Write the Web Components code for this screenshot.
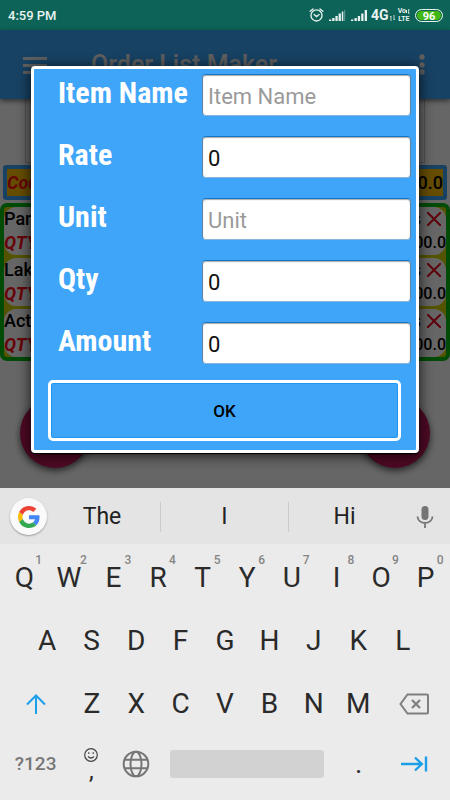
<!DOCTYPE html>
<html lang="en">
<head>
<meta charset="utf-8">
<meta name="viewport" content="width=device-width, initial-scale=1">
<title>Order List Maker</title>
<style>
html,body{margin:0;height:100%}
body{font-family:Roboto,"Liberation Sans",sans-serif;color:#000;background:#ebebeb}
</style>
</head>
<body>
<order-screen></order-screen>
<script>
const define = (name, html, setup) => {
  const t = document.createElement('template');
  t.innerHTML = '<style>*{box-sizing:border-box}button,input{font:inherit;color:inherit;margin:0;padding:0;border:0;background:none}svg{display:block;flex:none}</style>' + html;
  customElements.define(name, class extends HTMLElement {
    constructor() {
      super();
      this.attachShadow({ mode: 'open' }).append(t.content.cloneNode(true));
    }
    connectedCallback() {
      if (this.ready) return;
      this.ready = true;
      if (setup) setup(this, this.shadowRoot);
    }
  });
};

define('status-bar', `
<style>
:host{display:flex;align-items:center;height:30px;padding:0 7px 0 8px;background:#0d6357;color:#e8f2f0;font-size:13px;font-weight:500}
.icons{display:flex;align-items:center;gap:5px;margin-left:auto}
.net{display:flex;align-items:center;gap:3px;font-size:14px;font-weight:700}
.net span+svg{margin:6px 0 0 -2px}
.volte{display:grid;font-size:7px;line-height:8px;font-weight:700;text-align:center;margin-left:-2px}
.volte span{display:flex;justify-content:center;align-items:center}
.battery{display:grid;place-items:center;width:28px;height:13px;padding-top:1px;border:1px solid #e8f2f0;border-radius:7px;background:#43b814;box-shadow:inset 0 0 0 1px #0d6357;color:#fff;font-size:11px;line-height:11px;font-weight:700}
</style>
<span>4:59 PM</span>
<div class="icons">
 <svg width="15" height="16" viewBox="0 0 16 16" fill="none" stroke="currentColor" stroke-width="1.4" stroke-linecap="round"><circle cx="8" cy="8.500" r="5.900"/><path d="M1.200 4 4.300 1.500M14.800 4l-3.100-2.500M5.500 7.500 8 9.700l2.800-2.200"/></svg>
 <svg width="17" height="13" viewBox="0 0 17 13" fill="currentColor"><path d="M0 10.500h2.300V12H0zM3.200 9h2.300v3H3.200zM6.400 7h2.300v5H6.400zM9.600 4.500h2.300V12H9.600zM12.800 2.500h1.500V12h-1.500z"/><path opacity=".35" d="M15 1h1.200v11H15z"/></svg>
 <div class="net"><svg width="17" height="13" viewBox="0 0 17 13" fill="currentColor"><path d="M0 10.500h2.300V12H0zM3.500 9h2.300v3H3.500zM6.800 7h2.300v5H6.800zM10.200 4.500h2.300V12h-2.300zM13.700 1H16v11h-2.300z"/></svg><span>4G</span><svg width="5" height="6" viewBox="0 0 5 6" stroke="currentColor" fill="none" stroke-width=".8"><path d="M1 6V1L0 2.200M4 0v5l1-1.200"/></svg></div>
 <div class="volte"><span>Vo<svg width="4" height="5" viewBox="0 0 4 5" stroke="currentColor" fill="none"><path d="M.5 1v3M3 0q-1 2.500 0 5"/></svg></span><span>LTE</span></div>
 <div class="battery">96</div>
</div>`);

define('app-bar', `
<style>
:host{display:flex;align-items:center;height:69px;padding:0 16px 0 23px;background:#3ea5f9;color:#eee;box-shadow:0 2px 5px #0008;position:relative}
h1{flex:1;margin:0 0 0 44px;font-size:25px;line-height:32px;font-weight:500}
button{display:block}
</style>
<button aria-label="Menu"><svg width="24" height="18" viewBox="0 0 24 18" fill="currentColor"><path d="M0 1h24v3H0zM0 8h24v3H0zM0 15h24v3H0z"/></svg></button>
<h1>Order List Maker</h1>
<button aria-label="More"><svg width="24" height="22" viewBox="0 0 24 22" fill="currentColor"><circle cx="12" cy="3" r="2.700"/><circle cx="12" cy="11" r="2.700"/><circle cx="12" cy="18" r="2.700"/></svg></button>`);

define('order-card', `
<style>
:host{display:grid;grid-template-columns:1fr auto;align-content:center;height:48px;background:#fff;border-radius:12px;font-size:18px;line-height:24px;font-weight:500}
.qty{color:#ff0a16;font-style:italic;font-weight:700}
.r{display:flex;justify-content:flex-end;gap:6px;align-items:center;padding-right:5px}
.amt{text-align:right;font-size:16px}
</style>
<slot></slot><span class="r">s<button aria-label="Delete"><svg width="14" height="14" viewBox="0 0 14 14" stroke="#e8001f" stroke-width="2"><path d="m0 0 14 14M14 0 0 14"/></svg></button></span>
<span class="qty">QTY</span><span class="amt">00.0</span>`);

define('order-page', `
<style>
:host{display:flex;flex-direction:column;background:#fff}
.entry{height:64px;margin:0 25px;border:1px solid #ccc;border-top:0}
.total{display:flex;margin:2px 3px 3px;border:4px solid #3ea5f9;border-radius:3px;background:#ffc107;height:35px;line-height:27px;font-size:18px;font-weight:500;justify-content:space-between}
.total i{color:#ff0a16;font-weight:700}
.list{display:grid;gap:3px;border:4px solid #00be10;border-radius:7px;background:#d2d200;padding:0}
.fabs{display:flex;justify-content:space-between;padding:37px 20px 20px}
.fabs button{width:70px;height:70px;border-radius:50%;background:#c2185b;box-shadow:0 3px 7px #0009}
</style>
<app-bar></app-bar>
<div class="entry"></div>
<div class="total"><i>Cou</i><span>00.0</span></div>
<div class="list"><order-card>Par</order-card><order-card>Lak</order-card><order-card>Act</order-card></div>
<div class="fabs"><button aria-label="Add"></button><button aria-label="Share"></button></div>`);

define('item-field', `
<style>
:host{display:grid;grid-template-columns:144px 1fr;align-items:center}
label{font:700 30px/42px "Roboto Condensed","Liberation Sans Narrow",Roboto,sans-serif;color:#fff;height:42px;margin-top:-4px;white-space:nowrap}
input{width:100%;height:42px;padding:2px 5px 0;border:1px solid;border-color:#1276c4 #5d83a5 #8ab4d8;border-radius:4px;background:#fff;box-shadow:inset 0 1px 1px #aaa;font-size:22px;color:#111;outline:0;min-width:0}
input::placeholder{color:#9a9a9a;opacity:1}
</style>
<label for="f"></label><input id="f" type="text">`, (el, root) => {
  const name = el.getAttribute('name'), input = root.querySelector('input');
  root.querySelector('label').textContent = name;
  input.placeholder = name;
  input.value = el.getAttribute('value') || '';
});

define('item-dialog', `
<style>
:host{display:block;background:#3ea5f9;border:3px solid #fff;border-radius:4px;padding:5px 5px 9px 24px;box-shadow:0 2px 14px #000c,0 1px 1px #000}
form{display:grid;gap:20px}
.ok{display:block;height:61px;margin:-4px 10px 0 -10px;border:3px solid #fff;border-radius:5px;font-size:17px;font-weight:500;box-shadow:inset 0 0 0 1px #1c98f4}
</style>
<form onsubmit="return false">
<item-field name="Item Name"></item-field>
<item-field name="Rate" value="0"></item-field>
<item-field name="Unit"></item-field>
<item-field name="Qty" value="0"></item-field>
<item-field name="Amount" value="0"></item-field>
<button class="ok">OK</button>
</form>`);

define('suggestion-strip', `
<style>
:host{display:grid;grid-template-columns:44px 116fr 128fr 112fr 50fr;align-items:center;height:56px;padding-top:1px;box-sizing:border-box;background:#e4e4e4;color:#222;font-size:23px}
.g{display:grid;place-items:center;width:37px;height:37px;margin-left:10px;border-radius:50%;background:#fafafa;box-shadow:0 1px 2px #0005}
.w{height:30px;line-height:30px;min-width:0}
.w+.w{border-left:1px solid #ccc}
.mic{justify-self:center}
</style>
<button class="g" aria-label="Google"><svg width="22" height="22" viewBox="0 0 48 48"><path fill="#EA4335" d="M24 9.500c3.540 0 6.710 1.220 9.210 3.600l6.850-6.850C35.900 2.380 30.470 0 24 0 14.620 0 6.510 5.380 2.560 13.220l7.980 6.190C12.430 13.720 17.740 9.500 24 9.500z"/><path fill="#4285F4" d="M46.980 24.550c0-1.570-.15-3.090-.38-4.550H24v9.020h12.940c-.58 2.960-2.260 5.480-4.780 7.180l7.730 6c4.510-4.180 7.090-10.360 7.090-17.650z"/><path fill="#FBBC05" d="M10.530 28.590c-.48-1.450-.76-2.990-.76-4.590s.27-3.140.76-4.590l-7.980-6.190C.92 16.460 0 20.120 0 24c0 3.880.92 7.540 2.560 10.780l7.970-6.190z"/><path fill="#34A853" d="M24 48c6.480 0 11.930-2.130 15.890-5.810l-7.730-6c-2.150 1.450-4.920 2.300-8.160 2.300-6.260 0-11.570-4.220-13.470-9.910l-7.980 6.190C6.510 42.620 14.620 48 24 48z"/></svg></button>
<button class="w">The</button><button class="w">I</button><button class="w">Hi</button>
<button class="mic" aria-label="Voice input"><svg width="18" height="24" viewBox="0 0 18 24" fill="none" stroke="#757575"><rect x="5.500" y="1" width="7" height="14" rx="3.500" fill="#757575" stroke="none"/><path stroke-width="1.800" d="M1.500 11.500a7.500 6.500 0 0 0 15 0M9 18v5"/></svg></button>`);

define('key-cap', `
<style>
:host{display:block;flex:1 1 0;min-width:0;position:relative}
button{display:grid;place-items:center;width:100%;height:63px;font-size:28px;line-height:32px;color:#2a2a2a}
sup{position:absolute;left:50%;margin-left:11px;top:8px;font-size:12px;line-height:12px;font-weight:500;color:#858585}
</style>
<button><slot></slot></button>`, (el, root) => {
  if (el.hasAttribute('hint')) {
    const s = document.createElement('sup');
    s.textContent = el.getAttribute('hint');
    root.append(s);
  }
  if (el.hasAttribute('label')) root.querySelector('button').setAttribute('aria-label', el.getAttribute('label'));
});

define('soft-keyboard', `
<style>
:host{display:block;background:#ebebeb;padding-bottom:5px}
.row{display:flex;padding:0 2px}
.row.two{padding:0 25px}
.row.one{padding-top:2px}
.row.four{margin-top:-3px}
.wide{flex:67 1 0}
.n{flex:44 1 0}
.sp{flex:178 1 0}
.bar{display:block;width:154px;max-width:100%;height:28px;border-radius:3px;background:#d2d2d2}
.num{font-size:19px;font-weight:500;color:#777}
.stack{display:grid;justify-items:center;line-height:18px;font-size:24px}
</style>
<suggestion-strip></suggestion-strip>
<div class="row one"></div>
<div class="row two"></div>
<div class="row three"><key-cap class="wide" label="Shift"><svg width="20" height="20" viewBox="0 0 20 20" fill="none" stroke="#1a9fe8" stroke-width="2"><path d="M10 20V1.500M1 10.500l9-9 9 9"/></svg></key-cap></div>
<div class="row four">
<key-cap class="wide"><span class="num">?123</span></key-cap>
<key-cap class="n" label="Emoji, comma"><span class="stack"><svg width="14" height="14" viewBox="0 0 14 14" fill="none" stroke="#444" stroke-width="1.200"><circle cx="7" cy="7" r="6.300"/><path d="M4 8.500q3 3 6 0"/><path d="M4.800 4.300v1.600M9.200 4.300v1.600"/></svg><span>,</span></span></key-cap>
<key-cap class="n" label="Language"><svg width="28" height="28" viewBox="0 0 28 28" fill="none" stroke="#757575" stroke-width="2"><circle cx="14" cy="14" r="12.300"/><ellipse cx="14" cy="14" rx="5.500" ry="12.300"/><path d="M3 9.800h22M3 18.200h22"/></svg></key-cap>
<key-cap class="sp" label="Space"><span class="bar"></span></key-cap>
<key-cap class="n">.</key-cap>
<key-cap class="wide" label="Next"><svg width="28" height="16" viewBox="0 0 28 16" fill="none" stroke="#1a9fe8" stroke-width="2.400"><path d="M1 8h21M15 1.500 21.800 8 15 14.500M26 .5v15"/></svg></key-cap>
</div>`, (el, root) => {
  const fill = (sel, keys, hints) => [...keys].forEach((k, i) => {
    const c = document.createElement('key-cap');
    c.textContent = k;
    if (hints) c.setAttribute('hint', hints[i]);
    if (sel === '.three') c.className = 'n';
    root.querySelector(sel).append(c);
  });
  fill('.one', 'QWERTYUIOP', '1234567890');
  fill('.two', 'ASDFGHJKL');
  fill('.three', 'ZXCVBNM');
  const d = document.createElement('key-cap');
  d.className = 'wide';
  d.setAttribute('label', 'Backspace');
  d.innerHTML = '<svg width="30" height="22" viewBox="0 0 30 22" fill="none" stroke="#808080" stroke-width="2"><path d="M8.500 1.500H28q1 0 1 1v17q0 1-1 1H8.500L1.500 11z"/><path stroke-width="2.300" d="m13 7 8 8M21 7l-8 8"/></svg>';
  root.querySelector('.three').append(d);
});

define('order-screen', `
<style>
:host{display:flex;flex-direction:column;min-height:100vh}
main{flex:1;position:relative;display:grid}
.scrim{position:absolute;inset:0;background:#0009}
item-dialog{position:absolute;left:31px;right:31px;top:36px}
soft-keyboard{position:relative}
</style>
<status-bar></status-bar>
<main><order-page></order-page><div class="scrim"></div><item-dialog role="dialog" aria-label="Item"></item-dialog></main>
<soft-keyboard></soft-keyboard>`);
</script>
</body>
</html>
